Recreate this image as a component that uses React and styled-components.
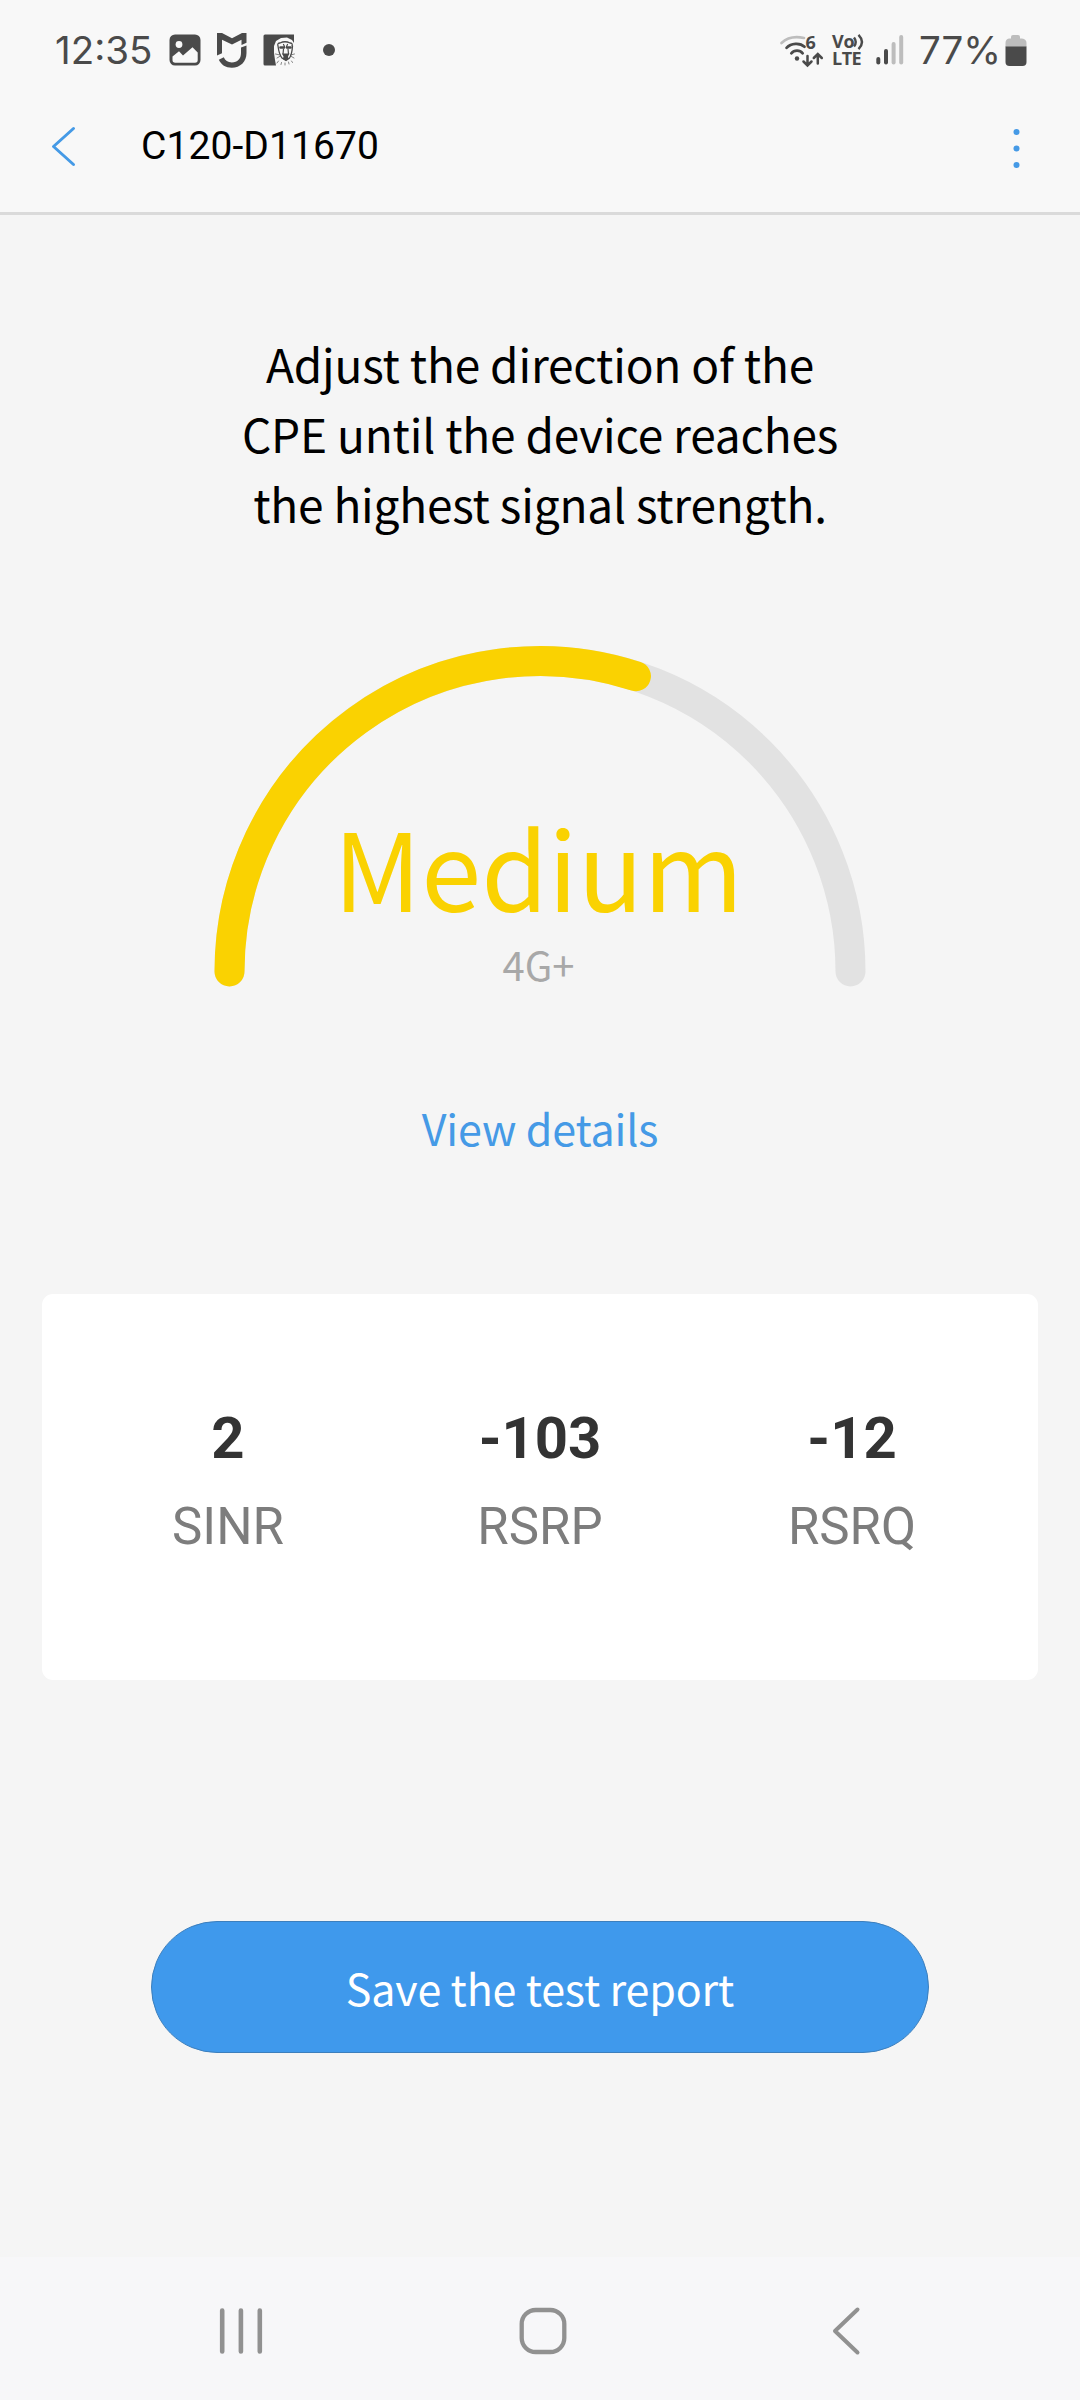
import React from "react";
import styled, { createGlobalStyle } from "styled-components";

const GlobalStyle = createGlobalStyle`
  * { box-sizing: border-box; }
  body { margin: 0; background: #f5f5f5; }
`;

const sans = `"Noto Sans CJK SC", "Noto Sans", sans-serif`;
const roboto = `Roboto, "Liberation Sans", sans-serif`;
const ink = "#4a4a4a";
const blue = "#459ae6";

const Screen = styled.div`
  width: 1080px;
  height: 2400px;
  display: flex;
  flex-direction: column;
  background: #f5f5f5;
  overflow: hidden;
`;

const StatusBar = styled.header`
  height: 100px;
  padding: 0 53px 0 54px;
  display: flex;
  align-items: center;
  justify-content: space-between;
  background: #f8f8f8;
`;

const StatusGroup = styled.div`
  display: flex;
  align-items: center;
`;

const StatusText = styled.span`
  font-family: Inter, sans-serif;
  font-size: 38.5px;
  line-height: 48px;
  color: ${ink};
  width: ${(p) => p.$width}px;
  padding-left: ${(p) => p.$inset || 0}px;
  letter-spacing: ${(p) => p.$spacing || 0}px;
  white-space: nowrap;
`;

const Glyph = styled.svg`
  display: block;
  flex: none;
  overflow: visible;
  width: ${(p) => p.$w}px;
  height: ${(p) => p.$h}px;
  margin-left: ${(p) => p.$gap || 0}px;
`;

const VolteBadge = styled.div`
  display: flex;
  flex-direction: column;
  width: 32px;
  margin-left: 9px;
  font-family: "Open Sans", sans-serif;
  font-weight: 700;
  font-size: 18px;
  line-height: 17px;
  color: ${ink};
`;

const VolteLine = styled.span`
  display: flex;
  align-items: center;
  height: 17px;
  letter-spacing: ${(p) => p.$spacing}px;
  white-space: nowrap;
`;

const AppBar = styled.div`
  height: 115px;
  padding: 0 60px 18px 50px;
  display: flex;
  align-items: center;
  background: #f8f8f8;
  border-bottom: 3px solid #dadada;
`;

const IconButton = styled.button`
  border: 0;
  padding: 0;
  background: none;
  display: flex;
`;

const Title = styled.h1`
  flex: 1;
  margin: -2px 0 0 64px;
  font: 400 39px/46px ${roboto};
  letter-spacing: 0.08px;
  color: #000;
`;

const Main = styled.main`
  flex: 1;
  display: flex;
  flex-direction: column;
  align-items: center;
  padding-top: 113px;
`;

const Instruction = styled.p`
  margin: 0;
  width: 640px;
  font: 400 46px/70px ${sans};
  letter-spacing: -0.2px;
  text-align: center;
  color: #000;
`;

const Gauge = styled.section`
  margin: 108px 0 0 0;
  width: 652px;
  height: 349px;
  display: grid;
  > * { grid-area: 1 / 1; }
`;

const GaugeReading = styled.div`
  padding-top: 159px;
  display: flex;
  flex-direction: column;
  align-items: center;
`;

const Level = styled.strong`
  margin-right: 3px;
  font: 400 108px/120px ${sans};
  color: #fad201;
`;

const Network = styled.span`
  margin: 10px 3px 0 0;
  font: 400 40px/58px ${sans};
  color: #a8a8a8;
`;

const DetailsLink = styled.a`
  margin-top: 100px;
  font: 400 43px/64px ${sans};
  letter-spacing: -0.15px;
  color: ${blue};
`;

const Card = styled.section`
  margin-top: 135px;
  width: 996px;
  height: 386px;
  padding: 110px 30px 0;
  display: grid;
  grid-template-columns: repeat(3, 1fr);
  align-items: start;
  background: #fff;
  border-radius: 11px;
`;

const Metric = styled.div`
  display: flex;
  flex-direction: column;
  align-items: center;
  font-family: ${roboto};
`;

const MetricValue = styled.span`
  font-size: 58px;
  font-weight: 700;
  line-height: 68px;
  color: #333;
`;

const MetricLabel = styled.span`
  margin-top: 24px;
  font-size: 51px;
  line-height: 61px;
  color: #7d7d7d;
`;

const SaveButton = styled.button`
  margin-top: 241px;
  width: 778px;
  height: 132px;
  padding: 0;
  border: 1px solid #3c7fbd;
  border-radius: 66px;
  background: #3f99ec;
  color: #fff;
  font: 400 43px/130px ${sans};
  letter-spacing: -0.15px;
`;

const NavBar = styled.nav`
  height: 143px;
  padding: 5px 220px 0 219px;
  display: grid;
  grid-template-columns: 300px 1fr auto;
  align-items: center;
  background: #f7f7f9;
`;

const metrics = [
  { value: "2", label: "SINR" },
  { value: "-103", label: "RSRP" },
  { value: "-12", label: "RSRQ" },
];

const PictureIcon = () => (
  <Glyph $w={32} $h={32} $gap={14} viewBox="0 0 32 32">
    <rect x="0.5" y="0.5" width="31" height="31" rx="5.5" fill={ink} />
    <circle cx="10" cy="10.5" r="3.4" fill="#f8f8f8" />
    <path d="M3.5 22.5 10 17.2l4 4.3 9.5-8.3 5.2 5.4V26q0 2.7-2.7 2.7H6.2q-2.7 0-2.7-2.7z" fill="#f8f8f8" />
  </Glyph>
);

const ShieldIcon = () => (
  <Glyph $w={30} $h={35} $gap={16} viewBox="0 0 30 35">
    <path d="M0 0h5l10 5.2L25 0h4.5v9.7L24.5 12V6.8L15 11.5 5 6.8v13.5L0 22.5z" fill={ink} />
    <path d="M29.5 12.4V20c0 8.8-6.2 14.7-14.7 14.7-6.2 0-10.6-3-13-8l5-2.4c1.3 3.4 4 5.1 8 5.1 5.8 0 9.2-3.6 9.2-9.4v-5.4z" fill={ink} />
  </Glyph>
);

const LionIcon = () => (
  <Glyph $w={32} $h={32} $gap={16} viewBox="0 0 32 32">
    <path d="M2 .5h29V9l-2-3-5-2.500-6 .5-5 3-2 5v7l1 7 1 5.500H2Q.5 31.500.5 30V2Q.5.500 2 .5z" fill={ink} />
    <g fill="none" stroke={ink} strokeLinecap="round">
      <path d="M15 12q-1-3 2-3 5-2.500 10 0 3 0 2 3M15 12q1 8 4 12l4 2.500 3.500-2.500q2.500-4 3-12" strokeWidth="1.300" />
      <path d="M12.500 20l4.500 1M14 24l3.500-2M31.500 20l-4 1M31 24l-3.500-2M14 29l1.500-2M18 30.500l.5-2M22 31v-2M26 30l-.5-2M29.500 28.500l-1-1.500" strokeWidth=".9" opacity=".75" />
      <path d="M17.500 13.500h3.500M24 13.500h3.500" strokeWidth="2.600" />
      <path d="M20.500 10.500l1 2M24.500 10.500l-1 2M20.500 15l-.5 5M25 15l.5 5" strokeWidth="1.200" />
    </g>
    <path d="M19 19.500h7.500l-1.500 3 .5 2.500-2.800 1.500-2.800-1.500.6-2.500z" fill={ink} />
  </Glyph>
);

const WifiIcon = () => (
  <Glyph $w={43} $h={34} viewBox="0 0 43 34">
    <g fill="none" strokeWidth="2.700" strokeLinecap="round">
      <path d="M1.500 10C7 4.800 15 3 24 5" stroke="#bdbdbd" />
      <path d="M6.500 14.800c4.500-4.800 13.500-5.500 18-1M11.300 20.300c3-3.500 8.500-3.500 11.400 0" stroke={ink} />
      <path d="M27.500 23v9M23.500 28.500l4 4 4-4M37.800 30.500v-9M33.800 25l4-4 4 4" stroke={ink} strokeWidth="2.500" />
    </g>
    <circle cx="17" cy="25.500" r="2.200" fill={ink} />
    <text x="25.500" y="16" fontFamily="Open Sans, sans-serif" fontWeight="700" fontSize="18" fill={ink}>6</text>
  </Glyph>
);

const VolteWaves = () => (
  <Glyph $w={10} $h={16} viewBox="0 0 10 16">
    <path d="M0 3.500q3.500 4.500 0 9M4.500 .8q7 7.200 0 14.400" fill="none" stroke={ink} strokeWidth="2.400" />
  </Glyph>
);

const SignalIcon = () => (
  <Glyph $w={28} $h={30} $gap={12} viewBox="0 0 28 30">
    <rect x="0.300" y="22" width="4" height="7.500" rx="2" fill={ink} />
    <rect x="8" y="14" width="4" height="15.500" rx="2" fill={ink} />
    <rect x="15.600" y="7" width="4" height="22.500" rx="2" fill="#bdbdbd" />
    <rect x="23.200" y="0" width="4" height="29.500" rx="2" fill="#bdbdbd" />
  </Glyph>
);

const BatteryIcon = () => (
  <Glyph $w={22} $h={32} viewBox="0 0 22 32">
    <path d="M6 3q0-2 2-2h5q2 0 2 2v1.500h2Q21.500 5 21.500 9v4H.5V9Q.5 5 4 4.500h2z" fill="#bdbdbd" />
    <path d="M.5 12.500h21V28q0 4-4 4h-13q-4 0-4-4z" fill={ink} />
  </Glyph>
);

export default function App() {
  return (
    <>
      <GlobalStyle />
      <Screen>
        <StatusBar>
          <StatusGroup>
            <StatusText $width={101} $inset={1}>12:35</StatusText>
            <PictureIcon />
            <ShieldIcon />
            <LionIcon />
            <Glyph $w={12} $h={12} $gap={28} viewBox="0 0 12 12">
              <circle cx="6" cy="6" r="6" fill={ink} />
            </Glyph>
          </StatusGroup>
          <StatusGroup>
            <WifiIcon />
            <VolteBadge>
              <VolteLine $spacing={-0.3}>Vo<VolteWaves /></VolteLine>
              <VolteLine $spacing={-0.5}>LTE</VolteLine>
            </VolteBadge>
            <SignalIcon />
            <Glyph $w={15} $h={1} />
            <StatusText $width={86}>77%</StatusText>
            <BatteryIcon />
          </StatusGroup>
        </StatusBar>

        <AppBar>
          <IconButton aria-label="Back">
            <Glyph $w={27} $h={42} viewBox="0 0 27 42">
              <path d="M23.500 2.500 3.500 20.500l20 18" fill="none" stroke={blue} strokeWidth="3" strokeLinecap="round" strokeLinejoin="round" />
            </Glyph>
          </IconButton>
          <Title>C120-D11670</Title>
          <IconButton aria-label="More">
            <Glyph $w={7} $h={40} viewBox="0 0 7 40">
              <circle cx="3.500" cy="5" r="3" fill={blue} />
              <circle cx="3.500" cy="21.500" r="3" fill={blue} />
              <circle cx="3.500" cy="38" r="3" fill={blue} />
            </Glyph>
          </IconButton>
        </AppBar>

        <Main>
          <Instruction>
            Adjust the direction of the
            <br />
            CPE until the device reaches
            <br />
            the highest signal strength.
          </Instruction>

          <Gauge>
            <Glyph $w={652} $h={341} viewBox="0 0 652 341">
              <g fill="none" strokeWidth="30" strokeLinecap="round">
                <path d="M15.500 325.500a310.500 310.500 0 0 1 621 0" stroke="#e2e2e2" />
                <path d="M15.500 325.500A310.500 310.500 0 0 1 421.950 30.200" stroke="#fad201" />
              </g>
            </Glyph>
            <GaugeReading>
              <Level>Medium</Level>
              <Network>4G+</Network>
            </GaugeReading>
          </Gauge>

          <DetailsLink>View details</DetailsLink>

          <Card>
            {metrics.map((m) => (
              <Metric key={m.label}>
                <MetricValue>{m.value}</MetricValue>
                <MetricLabel>{m.label}</MetricLabel>
              </Metric>
            ))}
          </Card>

          <SaveButton>Save the test report</SaveButton>
        </Main>

        <NavBar>
          <IconButton aria-label="Recent apps">
            <Glyph $w={44} $h={48} viewBox="0 0 44 48">
              <path d="M3.200 3.500v41M21.900 3.500v41M40.800 3.500v41" stroke="#919191" strokeWidth="4.600" strokeLinecap="round" />
            </Glyph>
          </IconButton>
          <IconButton aria-label="Home">
            <Glyph $w={48} $h={48} viewBox="0 0 48 48">
              <rect x="2.700" y="3" width="42.600" height="42" rx="14" fill="none" stroke="#919191" strokeWidth="4.300" />
            </Glyph>
          </IconButton>
          <IconButton aria-label="Back">
            <Glyph $w={28} $h={50} viewBox="0 0 28 50">
              <path d="M25.500 3.500 3 25l22.500 21.500" fill="none" stroke="#919191" strokeWidth="4" strokeLinecap="round" strokeLinejoin="round" />
            </Glyph>
          </IconButton>
        </NavBar>
      </Screen>
    </>
  );
}
